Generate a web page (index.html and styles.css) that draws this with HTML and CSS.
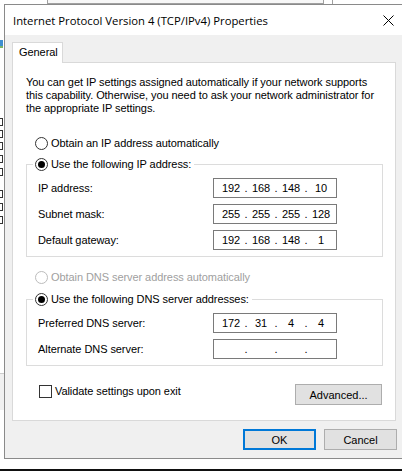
FILE: index.html
```html
<!DOCTYPE html>
<html>
<head>
<meta charset="utf-8">
<link rel="stylesheet" href="styles.css">
</head>
<body>
<div class="screen">
  <div class="bgwin">
    <div class="bg-top"></div>
    <div class="bg-topright"></div>
    <div class="bg-icon"></div>
    <div class="bg-chk" style="top:118px"></div>
    <div class="bg-chk" style="top:130px"></div>
    <div class="bg-chk" style="top:142px"></div>
    <div class="bg-chk" style="top:155px"></div>
    <div class="bg-chk" style="top:168px"></div>
    <div class="bg-chk" style="top:190px"></div>
    <div class="bg-chk" style="top:203px"></div>
    <div class="bg-chk" style="top:216px"></div>
    <div class="bg-band"></div>
  </div>

  <div class="dialog">
    <div class="titlebar">
      <span class="title">Internet Protocol Version 4 (TCP/IPv4) Properties</span>
      <svg class="close" width="11" height="11" viewBox="0 0 11 11"><path d="M0.5 0.5 L10.5 10.5 M10.5 0.5 L0.5 10.5" stroke="#000" stroke-width="1" fill="none"/></svg>
    </div>
    <div class="body">
      <div class="tabs"><div class="tab">General</div></div>
      <div class="panel">
        <p class="intro">You can get IP settings assigned automatically if your network supports this capability. Otherwise, you need to ask your network administrator for the appropriate IP settings.</p>

        <div class="radio-row first"><span class="radio"></span><span>Obtain an IP address automatically</span></div>

        <fieldset class="group g1">
          <legend><span class="radio on"></span><span>Use the following IP address:</span></legend>
          <div class="field"><span class="label">IP address:</span><div class="ipbox"><span class="oct">192</span><span class="dot">.</span><span class="oct">168</span><span class="dot">.</span><span class="oct">148</span><span class="dot">.</span><span class="oct">10</span></div></div>
          <div class="field"><span class="label">Subnet mask:</span><div class="ipbox"><span class="oct">255</span><span class="dot">.</span><span class="oct">255</span><span class="dot">.</span><span class="oct">255</span><span class="dot">.</span><span class="oct">128</span></div></div>
          <div class="field"><span class="label">Default gateway:</span><div class="ipbox"><span class="oct">192</span><span class="dot">.</span><span class="oct">168</span><span class="dot">.</span><span class="oct">148</span><span class="dot">.</span><span class="oct">1</span></div></div>
        </fieldset>

        <div class="radio-row disabled"><span class="radio"></span><span>Obtain DNS server address automatically</span></div>

        <fieldset class="group g2">
          <legend><span class="radio on"></span><span>Use the following DNS server addresses:</span></legend>
          <div class="field"><span class="label">Preferred DNS server:</span><div class="ipbox"><span class="oct">172</span><span class="dot">.</span><span class="oct">31</span><span class="dot">.</span><span class="oct">4</span><span class="dot">.</span><span class="oct">4</span></div></div>
          <div class="field"><span class="label">Alternate DNS server:</span><div class="ipbox"><span class="oct"></span><span class="dot">.</span><span class="oct"></span><span class="dot">.</span><span class="oct"></span><span class="dot">.</span><span class="oct"></span></div></div>
        </fieldset>

        <div class="bottom-row">
          <label class="check"><span class="box"></span><span>Validate settings upon exit</span></label>
          <button class="btn adv">Advanced...</button>
        </div>
      </div>
      <div class="actions">
        <button class="btn ok">OK</button>
        <button class="btn">Cancel</button>
      </div>
    </div>
  </div>
  <div class="floor"></div>
</div>
</body>
</html>
```

FILE: styles.css
```css
* { box-sizing: border-box; }
html, body { margin: 0; padding: 0; background: #fff; }
.screen {
  position: relative;
  width: 402px;
  height: 471px;
  overflow: hidden;
  background: #fff;
  font-family: "Liberation Sans", Arial, sans-serif;
  font-size: 11px;
  letter-spacing: -0.07px;
  color: #000;
}

/* background window fragments */
.bgwin { position: absolute; inset: 0; }
.bg-top { position: absolute; left: 47px; top: -2px; width: 277px; height: 6px; border: 1px solid #a0a0a0; background: #f7f7f7; }
.bg-topright { position: absolute; left: 332px; top: -2px; width: 70px; height: 6px; border-left: 1px solid #a0a0a0; }
.bg-icon { position: absolute; left: 0; top: 40px; width: 3px; height: 8px; background: #3d8ed0; border-bottom: 2px solid #79b46a; }
.bg-chk { position: absolute; left: -6px; top: 0; width: 9px; height: 8px; border: 1px solid #333; border-left: none; background: #fff; }
.bg-band { position: absolute; left: 0; top: 373px; width: 4px; height: 37px; background: #f0f0f0; border-top: 1px solid #ccc; }

/* dialog */
.dialog {
  position: absolute;
  left: 4px;
  top: 4px;
  width: 400px;
  height: 455px;
  border: 1px solid #8a8a8a;
  background: #f0f0f0;
  display: flex;
  flex-direction: column;
}
.titlebar {
  height: 30px;
  background: #fff;
  display: flex;
  align-items: center;
  justify-content: space-between;
  padding: 0 9px 0 8px;
}
.title {
  font-family: "Open Sans", "Noto Sans", sans-serif;
  font-size: 11.3px;
  letter-spacing: 0;
  color: #000;
}
.close { display: block; margin-top: 1px; }

.body {
  flex: 1;
  padding: 7px 6px 0 7px;
  display: flex;
  flex-direction: column;
}
.tabs { display: flex; }
.tab {
  position: relative;
  z-index: 1;
  width: 51px;
  height: 21px;
  border: 1px solid #d9d9d9;
  border-bottom: none;
  background: #fff;
  padding: 3px 0 0 6px;
  line-height: 13px;
  margin-bottom: -1px;
}
.panel {
  width: 384px;
  height: 359px;
  border: 1px solid #d9d9d9;
  background: #fff;
  padding: 13px 13px 0 13px;
  display: flex;
  flex-direction: column;
}
.intro {
  margin: 0;
  line-height: 13px;
  width: 350px;
}

.radio-row {
  display: flex;
  align-items: center;
  height: 13px;
  line-height: 13px;
  margin-left: 9px;
}
.radio-row.first { margin-top: 22px; }
.radio-row.disabled { margin-top: 14px; color: #a0a0a0; }
.radio {
  width: 13px;
  height: 13px;
  border: 1px solid #333;
  border-radius: 50%;
  margin-right: 3px;
  flex: none;
  position: relative;
  background: #fff;
}
.radio.on::after {
  content: "";
  position: absolute;
  left: 2px;
  top: 2px;
  width: 7px;
  height: 7px;
  border-radius: 50%;
  background: #000;
}
.disabled .radio { border-color: #bcbcbc; }

.group {
  margin: 0;
  min-inline-size: 0;
  border: 1px solid #dcdcdc;
  padding: 7px 0 6px 11px;
  width: 357px;
}
.group legend {
  display: flex;
  align-items: center;
  height: 13px;
  line-height: 13px;
  padding: 0 3px 0 2px;
  margin-left: -5px;
}
.g1 { margin-top: 8px; }
.g2 { margin-top: 9px; }
.field {
  display: flex;
  align-items: center;
  height: 20px;
  margin-bottom: 6px;
}
.field:last-child { margin-bottom: 0; }
.label { width: 175px; flex: none; }
.ipbox {
  width: 124px;
  height: 20px;
  border: 1px solid #7a7a7a;
  background: #fff;
  display: flex;
  align-items: center;
  padding-left: 5px;
}
.oct { width: 24px; text-align: center; }
.dot { width: 6px; text-align: center; }

.bottom-row {
  display: flex;
  justify-content: space-between;
  align-items: flex-start;
  margin-top: 18px;
  padding-left: 13px;
}
.check { display: flex; align-items: center; line-height: 13px; margin-top: 1px; }
.check .box {
  width: 13px;
  height: 13px;
  border: 1px solid #333;
  background: #fff;
  margin-right: 3px;
}

.btn {
  font-family: "Liberation Sans", Arial, sans-serif;
  font-size: 11px;
  color: #000;
  background: #e1e1e1;
  border: 1px solid #adadad;
  height: 21px;
  width: 73px;
  padding: 0;
  margin: 0;
}
.adv { width: 87px; }
.ok { border: 2px solid #0078d7; }
.actions {
  display: flex;
  justify-content: flex-end;
  gap: 8px;
  margin-top: 8px;
}
.floor {
  position: absolute;
  left: 0;
  right: 0;
  top: 469px;
  height: 2px;
  background: #111;
}
```
